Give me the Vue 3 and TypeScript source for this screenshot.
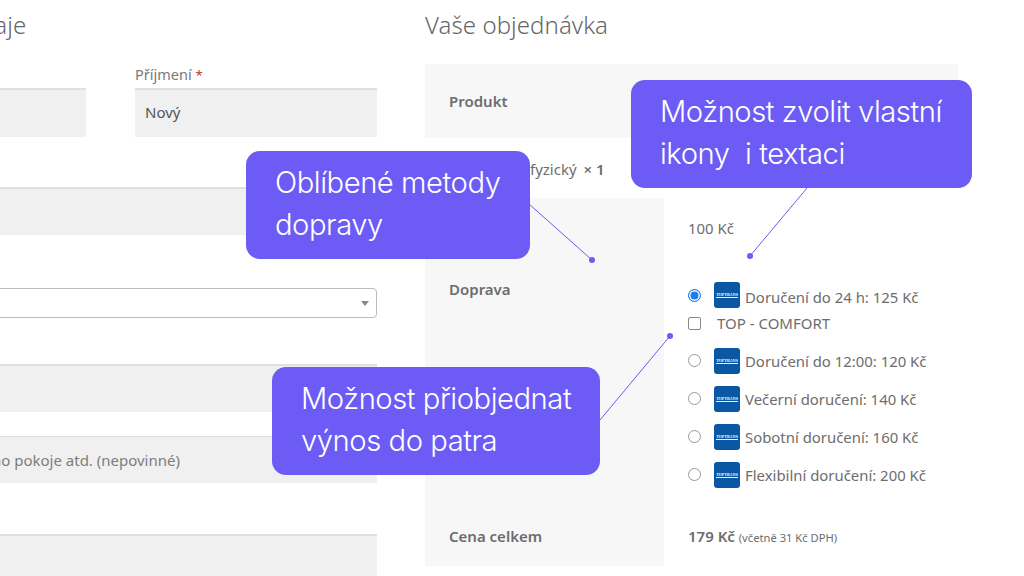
<script setup lang="ts">
interface Method { label: string; kind: 'opt' | 'check'; on?: boolean }
const methods: Method[] = [
  { label: 'Doručení do 24 h: 125 Kč', kind: 'opt', on: true },
  { label: 'TOP - COMFORT', kind: 'check' },
  { label: 'Doručení do 12:00: 120 Kč', kind: 'opt' },
  { label: 'Večerní doručení: 140 Kč', kind: 'opt' },
  { label: 'Sobotní doručení: 160 Kč', kind: 'opt' },
  { label: 'Flexibilní doručení: 200 Kč', kind: 'opt' }
]
</script>

<template>
  <div class="page">
    <main class="columns">
      <section class="billing">
        <h2>Fakturační údaje</h2>
        <div class="pair">
          <div class="field"><div class="lab"></div><div class="input"></div></div>
          <div class="field"><div class="lab">Příjmení <b>*</b></div><div class="input">Nový</div></div>
        </div>
        <div class="input company"></div>
        <div class="select"><span class="caret"></span></div>
        <div class="input street"></div>
        <div class="input room"><span class="hint">no pokoje atd. (nepovinné)</span></div>
        <div class="input city"></div>
      </section>

      <section class="order">
        <h2>Vaše objednávka</h2>
        <div class="table">
          <div class="row head"><div class="th">Produkt</div><div></div></div>
          <div class="row item"><div class="name">fyzický <b>× 1</b></div><div></div></div>
          <div class="row sub"><div class="shade"></div><div class="td">100 Kč</div></div>
          <div class="row ship">
            <div class="th shade">Doprava</div>
            <div class="td methods">
              <div v-for="m in methods" :key="m.label" class="method" :class="m.kind">
                <span v-if="m.kind === 'opt'" class="radio" :class="{ on: m.on }"></span>
                <span v-else class="box"></span>
                <span v-if="m.kind === 'opt'" class="logo"><i>TOPTRANS</i></span>
                <span class="mlabel">{{ m.label }}</span>
              </div>
            </div>
          </div>
          <div class="row total">
            <div class="th shade">Cena celkem</div>
            <div class="td"><b class="sum">179 Kč</b> <small>(včetně 31 Kč DPH)</small></div>
          </div>
        </div>
      </section>
    </main>

    <svg class="wires" width="1024" height="576" viewBox="0 0 1024 576" aria-hidden="true">
      <g stroke="#6c5cf5" stroke-width="1" fill="none">
        <path d="M529 204 592 260" />
        <path d="M807 188 750 256" />
        <path d="M600 420 670 336" />
      </g>
      <g fill="#6c5cf5">
        <circle cx="592" cy="260" r="3" />
        <circle cx="750" cy="256" r="3" />
        <circle cx="670" cy="336" r="3" />
      </g>
    </svg>
    <div class="note n1">Oblíbené metody<br />dopravy</div>
    <div class="note n2">Možnost zvolit vlastní<br />ikony&nbsp; i textaci</div>
    <div class="note n3">Možnost přiobjednat<br />výnos do patra</div>
  </div>
</template>

<style>
html, body { margin: 0; background: #fff; }
</style>

<style scoped>
.page {
  position: relative;
  width: 1024px;
  height: 576px;
  overflow: hidden;
  background: #fff;
  font-family: "Noto Sans", "Open Sans", sans-serif;
  font-size: 15px;
  color: #6d6d6d;
}
.columns {
  display: grid;
  grid-template-columns: 533px 533px;
  column-gap: 48px;
  margin-left: -156px;
}
h2 {
  margin: 0;
  height: 64px;
  font-size: 24px;
  font-weight: 300;
  line-height: 50px;
  letter-spacing: 0.07px;
  color: #666;
}
.billing h2 { padding-left: 2px; }
.pair {
  display: grid;
  grid-template-columns: 242px 242px;
  column-gap: 49px;
}
.lab {
  height: 24px;
  line-height: 21px;
  font-size: 14.5px;
  color: #7a7a7a;
}
.lab b { color: #c0392b; font-weight: 400; font-size: 13px; }
.input {
  box-sizing: border-box;
  height: 49px;
  padding: 0 10px;
  background: #f0f0f0;
  border-top: 2px solid #e0e0e0;
  line-height: 45px;
  color: #555;
  font-size: 15px;
}
.company { margin-top: 50px; height: 48px; }
.select {
  position: relative;
  box-sizing: border-box;
  height: 30px;
  margin-top: 53px;
  border: 1px solid #bbb;
  border-radius: 4px;
}
.caret {
  position: absolute;
  right: 7px;
  top: 12px;
  border-left: 4px solid transparent;
  border-right: 4px solid transparent;
  border-top: 5px solid #888;
}
.street { margin-top: 46px; height: 48px; }
.room {
  display: flex;
  justify-content: flex-end;
  margin-top: 24px;
  height: 47px;
  border-top: 1px dotted #ccc;
  padding-right: 197px;
  line-height: 46px;
  white-space: nowrap;
}
.hint { color: #7d7d7d; font-size: 15px; }
.city { margin-top: 51px; height: 60px; }

.row { display: grid; grid-template-columns: 239px 294px; }
.th { padding-left: 24px; font-weight: 600; color: #6d6d6d; font-size: 15px; }
.td { padding-left: 24px; color: #6d6d6d; font-size: 14.9px; }
.shade { background: #f7f7f7; }
.head { height: 74px; background: #f7f7f7; line-height: 74px; }
.item { height: 60px; line-height: 62px; }
.name { padding-left: 105px; white-space: nowrap; font-size: 15px; }
.name b { font-weight: 600; margin-left: 3px; }
.sub { height: 62px; line-height: 61px; }
.ship { height: 249px; }
.ship .th { padding-top: 18px; line-height: 22px; }
.methods { padding-top: 22px; }
.method { display: flex; align-items: center; height: 38px; font-size: 14.9px; white-space: nowrap; }
.method.check { height: 14px; margin-top: 8px; margin-bottom: 12px; }
.method:first-child { height: 26px; }
.method:first-child .mlabel { padding-top: 3px; }
.radio {
  box-sizing: border-box;
  width: 13px;
  height: 13px;
  margin-top: -2px;
  border: 1px solid #999;
  border-radius: 50%;
  background: #fff;
  flex: none;
}
.method:first-child .radio { margin-top: 0; }
.radio.on { border: 1.5px solid #1a7ef0; box-shadow: inset 0 0 0 1.5px #fff; background: #1a7ef0; }
.box {
  box-sizing: border-box;
  width: 13px;
  height: 13px;
  border: 1px solid #888;
  border-radius: 2px;
  flex: none;
}
.check .mlabel { margin-left: 16px; font-size: 15px; }
.logo {
  display: flex;
  align-items: center;
  justify-content: center;
  width: 26px;
  height: 26px;
  margin: 0 5px 0 13px;
  border-radius: 3px;
  background: #0a57a4;
  flex: none;
}
.logo i {
  font: 700 4px/4px "Liberation Serif", serif;
  color: #fff;
  border-bottom: 1px solid #e9eef5;
  white-space: nowrap;
}
.total { height: 57px; }
.total .th { line-height: 54px; }
.total .td { line-height: 54px; }
.sum { font-size: 15px; font-weight: 600; }
small { font-size: 11.2px; }

.wires { position: absolute; left: 0; top: 0; }
.note {
  position: absolute;
  box-sizing: border-box;
  height: 108px;
  padding: 11px 29px;
  border-radius: 14px;
  background: #6c5cf5;
  color: #fff;
  font-family: Inter, sans-serif;
  font-size: 29.2px;
  font-weight: 300;
  letter-spacing: -0.45px;
  line-height: 42px;
  white-space: nowrap;
}
.n1 { left: 246px; top: 151px; width: 284px; }
.n2 { left: 631px; top: 80px; width: 341px; }
.n3 { left: 272px; top: 367px; width: 328px; }
</style>
